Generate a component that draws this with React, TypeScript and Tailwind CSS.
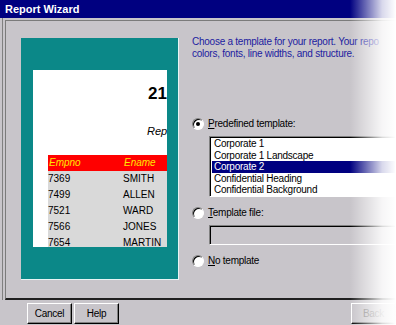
const rows = [
  ["7369", "SMITH"],
  ["7499", "ALLEN"],
  ["7521", "WARD"],
  ["7566", "JONES"],
  ["7654", "MARTIN"],
];

const templates = [
  "Corporate 1",
  "Corporate 1 Landscape",
  "Corporate 2",
  "Confidential Heading",
  "Confidential Background",
];

function Radio({ checked }: { checked?: boolean }) {
  return (
    <span className="flex h-[12px] w-[12px] shrink-0 items-center justify-center rounded-full border border-t-[#808080] border-l-[#808080] border-r-white border-b-white bg-white shadow-[inset_1px_1px_0_#000]">
      {checked && <span className="h-[4px] w-[4px] rounded-full bg-black" />}
    </span>
  );
}

function Button({ children, className = "" }: { children: React.ReactNode; className?: string }) {
  return (
    <div
      className={`flex h-[21px] w-[48px] items-center justify-center border border-t-white border-l-white border-r-black border-b-black shadow-[inset_-1px_-1px_0_#808080] ${className}`}
    >
      {children}
    </div>
  );
}

export default function App() {
  return (
    <div className="relative h-[325px] w-[396px] overflow-hidden bg-[#c8c5ca] font-['Liberation_Sans',Arial,sans-serif] text-[10px] leading-[12px] tracking-[-0.25px] text-black">
      <div className="flex h-[18px] items-center bg-[#000080] pl-[5px] text-[11px] font-bold tracking-normal text-white">
        Report Wizard
      </div>
      <div className="ml-[2px] border-l border-[#808080] pl-[2px] pt-[2px]">
        <div className="h-[280px] border-t border-l border-b-2 border-t-[#7b7b7b] border-l-[#7b7b7b] border-b-[#202020]">
          <div className="flex">
            {/* preview */}
            <div className="ml-[15px] mt-[17px] h-[242px] w-[158px] shrink-0 border-r border-b border-[#e8f4f4] bg-[#0b8888] pl-[12px] pt-[32px]">
              <div className="h-[177px] w-[134px] overflow-hidden bg-white tracking-normal">
                <div className="mt-[15px] ml-[115px] whitespace-nowrap text-[17px] leading-[18px] font-bold">21</div>
                <div className="mt-[22px] ml-[114px] whitespace-nowrap text-[11px] italic">Rep</div>
                <div className="ml-[15px] mt-[18px]">
                  <div className="flex h-[16px] items-center bg-[#ff0000] italic text-[#ffe800]">
                    <span className="w-[76px] pl-[1px]">Empno</span>
                    <span>Ename</span>
                  </div>
                  {rows.map(([no, name]) => (
                    <div key={no} className="flex h-[16px] items-center bg-[#d9d9d9]">
                      <span className="w-[75px]">{no}</span>
                      <span>{name}</span>
                    </div>
                  ))}
                </div>
              </div>
            </div>
            {/* options */}
            <div className="ml-[13px] flex min-w-0 flex-1 flex-col">
              <div className="mt-[15px] whitespace-nowrap text-[#1c1ca0]">
                <div>Choose a template for your report. Your repo</div>
                <div>colors, fonts, line widths, and structure.</div>
              </div>
              <div className="mt-[58px] flex items-center gap-[4px]">
                <Radio checked />
                <span>
                  <span className="underline">P</span>redefined template:
                </span>
              </div>
              <div className="ml-[17px] mt-[6px] h-[61px] border border-t-[#808080] border-l-[#808080] border-r-white border-b-white bg-white pl-[2px] pt-[1px] shadow-[inset_1px_1px_0_#000]">
                {templates.map((t, i) => (
                  <div
                    key={t}
                    className={`h-[11.6px] whitespace-nowrap pl-[2px] leading-[11.6px] ${i === 2 ? "bg-[#000080] text-white" : ""}`}
                  >
                    {t}
                  </div>
                ))}
              </div>
              <div className="mt-[10px] flex items-center gap-[4px]">
                <Radio />
                <span>
                  <span className="underline">T</span>emplate file:
                </span>
              </div>
              <div className="ml-[17px] mt-[6px] h-[20px] border border-t-[#808080] border-l-[#808080] border-r-white border-b-white shadow-[inset_1px_1px_0_#000]" />
              <div className="mt-[10px] flex items-center gap-[4px]">
                <Radio />
                <span>
                  <span className="underline">N</span>o template
                </span>
              </div>
            </div>
          </div>
        </div>
      </div>
      <div className="ml-[27px] mt-[3px] flex gap-[2px]">
        <Button>Cancel</Button>
        <Button>Help</Button>
        <Button className="ml-[230px] text-[#808080]">Back</Button>
      </div>
      <div className="pointer-events-none absolute top-0 right-0 h-full w-[46px] bg-linear-to-r from-transparent via-white/85 via-70% to-white" />
    </div>
  );
}
